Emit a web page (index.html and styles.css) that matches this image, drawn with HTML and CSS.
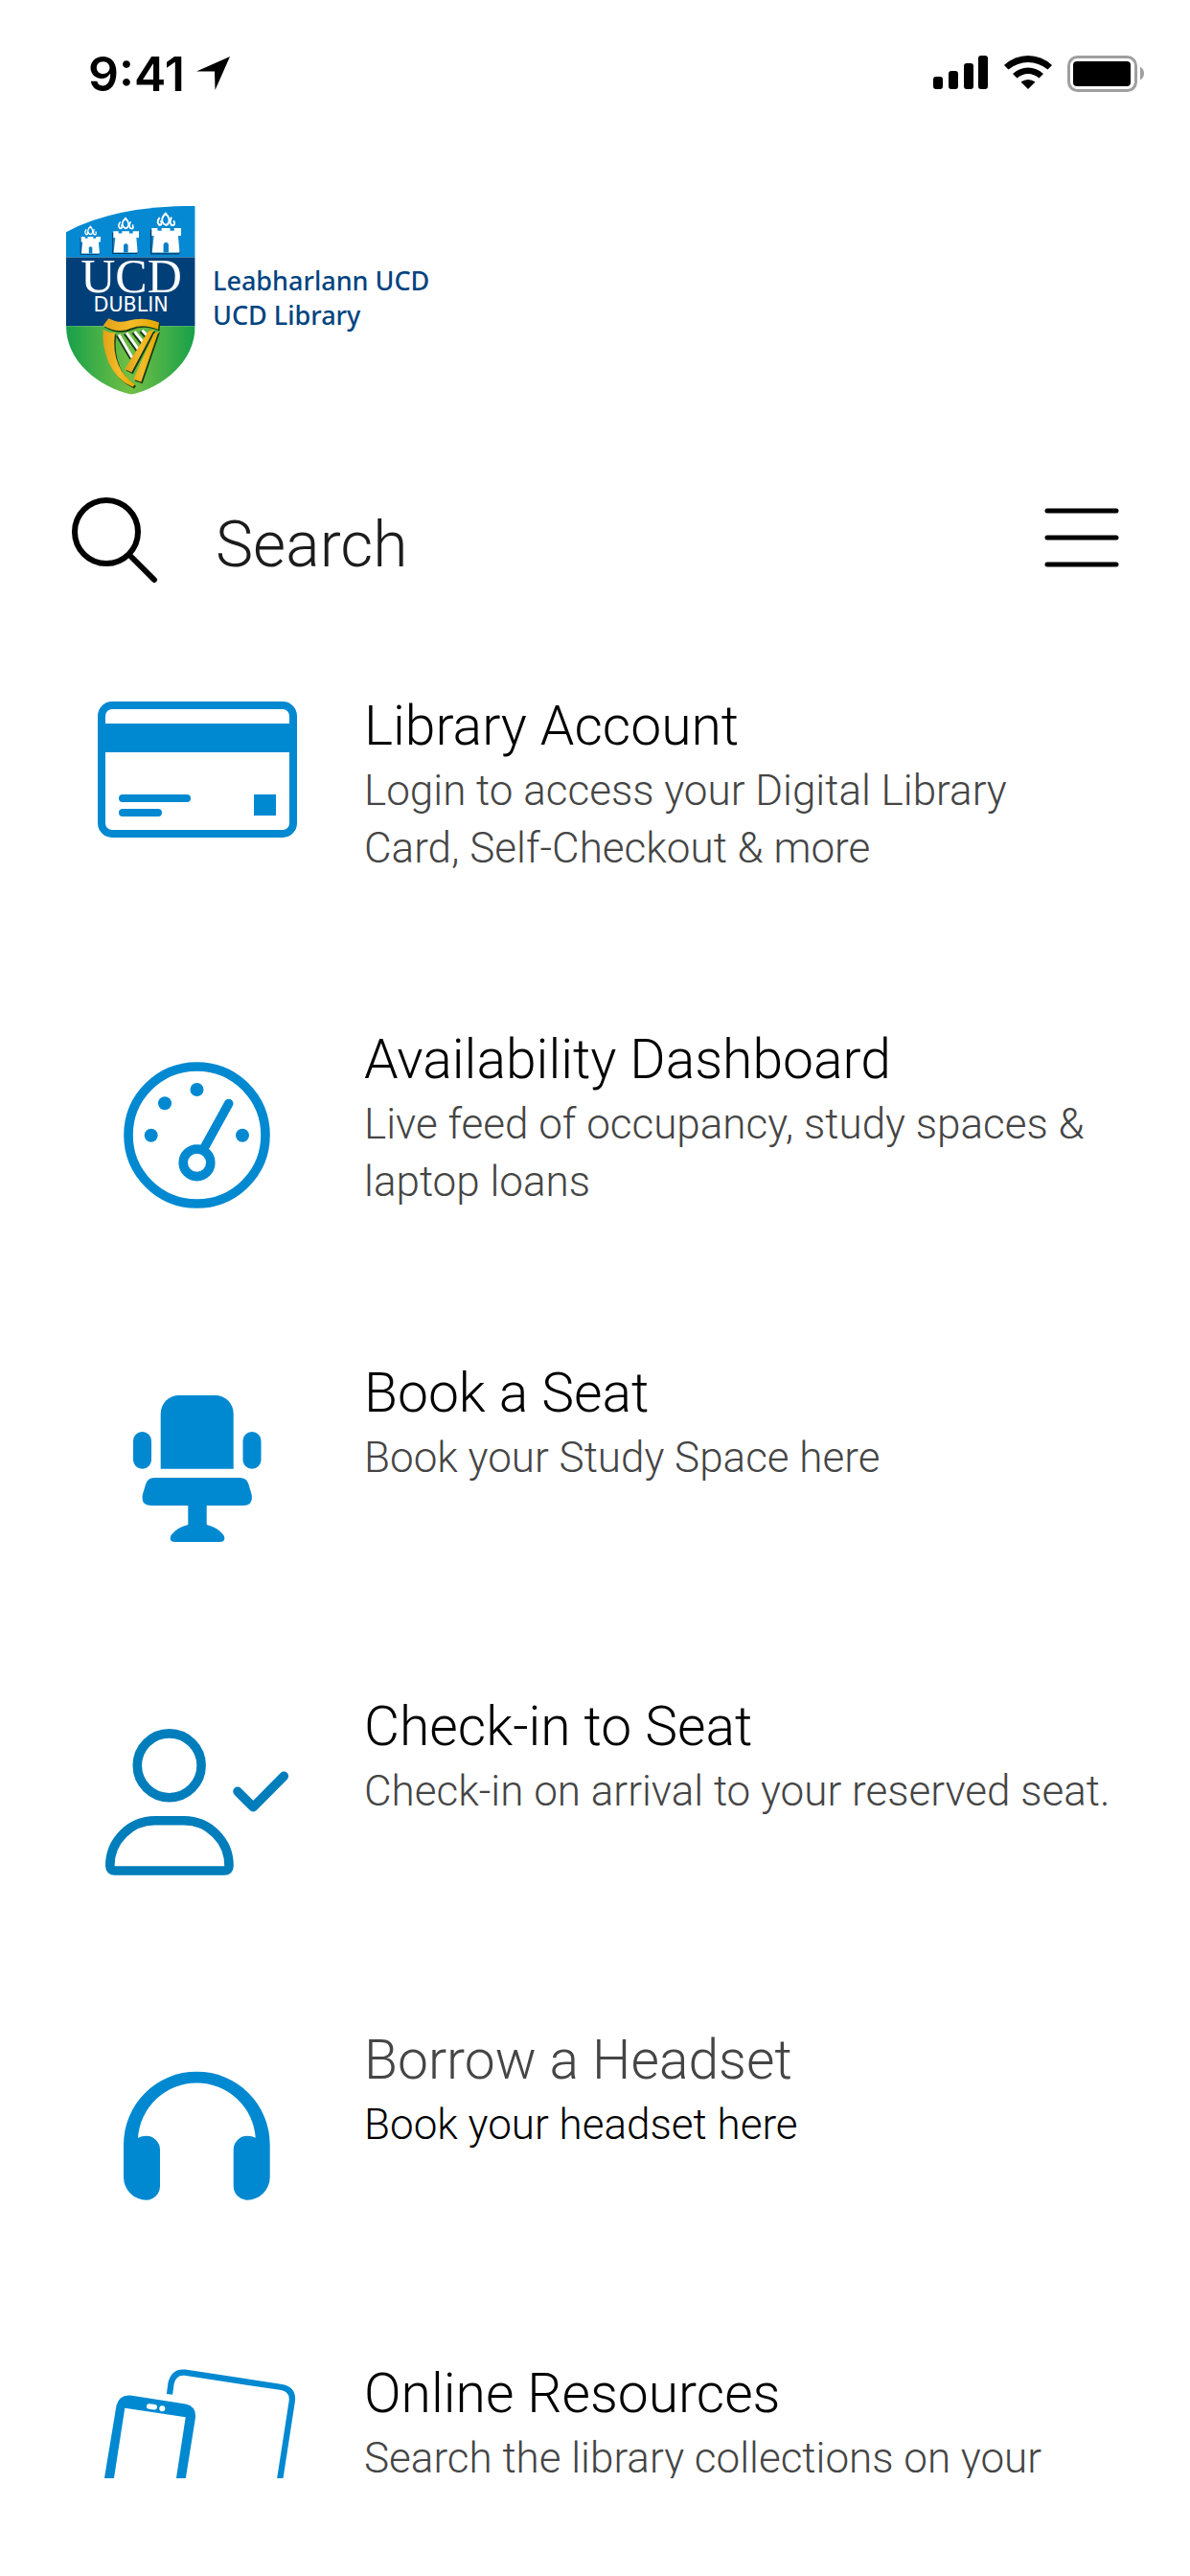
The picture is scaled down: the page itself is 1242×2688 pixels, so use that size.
FILE: index.html
```html
<!DOCTYPE html>
<html lang="en">
<head>
  <meta charset="UTF-8">
  <meta name="viewport" content="width=device-width, initial-scale=1.0">
  <title>UCD Library</title>
  <link rel="stylesheet" href="styles.css">
</head>
<body>
  <div class="screen">
    <div class="status-bar">
      <div class="status-time">
        <span>9:41</span>
        <svg width="36" height="36" viewBox="0 0 36 36"><path d="M0 15.500L35 0L19.500 35L19 15.500Z"/></svg>
      </div>
      <div class="status-icons">
        <svg width="58" height="38" viewBox="0 0 58 38">
          <rect x="0" y="22" width="10" height="13" rx="3"/>
          <rect x="16" y="16" width="10" height="19" rx="3"/>
          <rect x="32" y="8" width="10" height="27" rx="3"/>
          <rect x="47" y="0" width="10" height="35" rx="3"/>
        </svg>
        <svg width="50" height="38" viewBox="0 0 50 38">
          <path d="M0 10Q11 0 25 0T50 10L45.500 14.500Q36 7 25 7T4.500 14.500Z"/>
          <path d="M9 19Q16 12.500 25 12.500T41 19L36.500 23.500Q31 19 25 19T13.500 23.500Z"/>
          <path d="M17.500 27.500Q21 25 25 25T32.500 27.500L25 35Z"/>
        </svg>
        <svg width="80" height="38" viewBox="0 0 80 38">
          <rect x="1.500" y="1.500" width="70" height="35" rx="9" fill="none" stroke="#9f9f9f" stroke-width="3"/>
          <rect x="6" y="6" width="60" height="26" rx="4"/>
          <path d="M76 11.500Q80 14 80 18.500T76 25.500Z" fill="#9f9f9f"/>
        </svg>
      </div>
    </div>

    <header class="brand">
      <svg class="brand-logo" viewBox="57 43 405 593" role="img" aria-label="UCD Dublin">
        <defs>
          <clipPath id="shield"><path d="M57 127Q210 45 461 45V420C461 535 360 612 262 636C160 612 57 535 57 420Z"/></clipPath>
          <linearGradient id="green"><stop offset="0" stop-color="#17a04a"/><stop offset=".5" stop-color="#72bf44"/><stop offset="1" stop-color="#17a04a"/></linearGradient>
          <linearGradient id="gold"><stop offset="0" stop-color="#e0a018"/><stop offset=".5" stop-color="#f6bb28"/><stop offset="1" stop-color="#e3a800"/></linearGradient>
          <g id="tower">
            <path d="M-2 44V101H72L78 96" fill="none" stroke="#0a3a60" stroke-width="3"/>
            <path d="M0 40H16V46H27V40H50V46H61V40H80V58H72L76 98H1L6 58H0Z" fill="#fff"/>
            <path d="M32 98V78Q39 69 46 78V98Z" fill="#0a80c4"/>
            <g fill="none" stroke="#fff" stroke-width="5">
              <path d="M38 5Q22 18 32 29Q42 37 47 25Q50 16 38 5Z"/>
              <path d="M22 15Q12 25 20 32Q30 34 25 22"/>
              <path d="M54 14Q47 26 53 32Q66 36 60 22"/>
            </g>
          </g>
        </defs>
        <g clip-path="url(#shield)">
          <path fill="#0489d2" d="M57 43H462V206H57Z"/>
          <path fill="#003f78" d="M57 206H462V421H57Z"/>
          <path fill="url(#green)" d="M57 421H462V636H57Z"/>
        </g>
        <use href="#tower" transform="translate(104 105) scale(.76 .91)"/>
        <use href="#tower" transform="translate(205 78) scale(1 1.150)"/>
        <use href="#tower" transform="translate(325 62) scale(1.150 1.320)"/>
        <g fill="#fff" text-anchor="middle">
          <text class="logo-serif" x="261" y="317">UCD</text>
          <text class="logo-sans" x="260" y="377">DUBLIN</text>
        </g>
        <g fill="none" stroke="#173c16" stroke-width="14"><path d="M219 450L262 522M243 444L283 500M268 440L300 480M292 436L314 460"/></g>
        <g fill="none" stroke="#fff" stroke-width="9"><path d="M222 448L264 520M246 442L286 498M271 438L303 478M295 434L317 458"/></g>
        <g fill="#173c16" transform="translate(4 5)">
          <path d="M173 420Q185 402 191 397Q220 414 250 405Q300 390 348 410L345 432Q300 412 260 428Q220 447 173 420Z"/>
          <path d="M173 432Q190 444 210 442Q202 500 222 545Q238 580 272 604L266 612Q215 590 190 535Q168 480 173 432Z"/>
          <path d="M314 438L333 432L262 566L241 556ZM331 446L347 436L292 596L268 588Z"/>
        </g>
        <g fill="url(#gold)">
          <path d="M173 420Q185 402 191 397Q220 414 250 405Q300 390 348 410L345 432Q300 412 260 428Q220 447 173 420Z"/>
          <path d="M173 432Q190 444 210 442Q202 500 222 545Q238 580 272 604L266 612Q215 590 190 535Q168 480 173 432Z"/>
          <path d="M314 438L333 432L262 566L241 556ZM331 446L347 436L292 596L268 588Z"/>
        </g>
      </svg>
      <p class="brand-name">Leabharlann UCD<br>UCD Library</p>
    </header>

    <form class="search">
      <button type="submit" class="icon-button" aria-label="Submit search">
        <svg width="90" height="90" viewBox="0 0 90 90" fill="none" stroke="#000" stroke-linecap="round">
          <circle cx="36" cy="36" r="33" stroke-width="6"/>
          <path d="M60 60L86 86" stroke-width="6"/>
        </svg>
      </button>
      <input type="search" class="search-input" placeholder="Search" aria-label="Search">
      <button type="button" class="icon-button menu-button" aria-label="Menu">
        <svg width="78" height="62" viewBox="0 0 78 62" stroke="#000" stroke-width="5" stroke-linecap="round">
          <path d="M3 3H75M3 31H75M3 59H75"/>
        </svg>
      </button>
    </form>

    <nav class="menu">
      <a class="menu-item" href="#account">
        <svg class="menu-icon" viewBox="0 0 208 208">
          <rect x="4" y="4" width="200" height="134" rx="11" fill="none" stroke="currentColor" stroke-width="8"/>
          <path d="M2 23H206V53H2ZM163 97H186V119H163Z"/>
          <rect x="22" y="97" width="75" height="8" rx="4"/>
          <rect x="22" y="112" width="45" height="8" rx="4"/>
        </svg>
        <div class="menu-text">
          <h2>Library Account</h2>
          <p>Login to access your Digital Library<br>Card, Self-Checkout &amp; more</p>
        </div>
      </a>
      <a class="menu-item" href="#dashboard">
        <svg class="menu-icon" viewBox="0 0 208 208">
          <g fill="none" stroke="currentColor" stroke-width="9.600" stroke-linecap="round">
            <circle cx="103.500" cy="104.500" r="71.500"/>
            <circle cx="103.500" cy="133.300" r="14.300"/>
            <path d="M110.500 119L136.700 71.500"/>
          </g>
          <circle cx="103.500" cy="57" r="7"/>
          <circle cx="70" cy="71.300" r="7"/>
          <circle cx="55.700" cy="104.700" r="7"/>
          <circle cx="151" cy="104.700" r="7"/>
        </svg>
        <div class="menu-text">
          <h2>Availability Dashboard</h2>
          <p>Live feed of occupancy, study spaces &amp; laptop loans</p>
        </div>
      </a>
      <a class="menu-item" href="#book">
        <svg class="menu-icon" viewBox="0 0 208 208">
          <path d="M65.700 104.700V47A19 19 0 0 1 84.700 28H122.700A19 19 0 0 1 141.700 47V104.700Z"/>
          <rect x="37" y="66" width="19" height="38.700" rx="9.500"/>
          <rect x="151.500" y="66" width="19" height="38.700" rx="9.500"/>
          <path d="M59 114H148.500Q155.500 114 157.500 121L160.500 131Q163 143 151.500 143H56Q44.500 143 47 131L50 121Q52 114 59 114Z"/>
          <path d="M94.300 142H113.700V163Q125 165.500 131.500 174Q134.500 181 127.500 181H80.500Q73.500 181 76.500 174Q83 165.500 94.300 163Z"/>
        </svg>
        <div class="menu-text">
          <h2>Book a Seat</h2>
          <p>Book your Study Space here</p>
        </div>
      </a>
      <a class="menu-item" href="#checkin">
        <svg class="menu-icon menu-icon-dark" viewBox="0 0 208 208">
          <g fill="none" stroke="currentColor" stroke-width="9.600" stroke-linecap="round" stroke-linejoin="round">
            <circle cx="74.700" cy="66.300" r="33.400"/>
            <path d="M12.800 171A47 47 0 0 1 60 123.800H90A47 47 0 0 1 137 171Q137 176 132 176H18Q12.800 176 12.800 171Z"/>
            <path d="M146 93.300L162.300 109.700L194.300 77.300"/>
          </g>
        </svg>
        <div class="menu-text">
          <h2>Check-in to Seat</h2>
          <p>Check-in on arrival to your reserved seat.</p>
        </div>
      </a>
      <a class="menu-item menu-item-alt" href="#headset">
        <svg class="menu-icon" viewBox="0 0 208 208">
          <path d="M27 148V114A76.300 76.300 0 0 1 179.700 114V148A24 24 0 0 1 156 171.700A14.500 14.500 0 0 1 141.700 157.500V119A14.500 14.500 0 0 1 156 104.700Q161 104.700 164.700 106.700A61.500 61.500 0 0 0 42 106.700Q46 104.700 50.700 104.700A14.500 14.500 0 0 1 65 119V157.500A14.500 14.500 0 0 1 50.700 171.700A24 24 0 0 1 27 148Z"/>
        </svg>
        <div class="menu-text">
          <h2>Borrow a Headset</h2>
          <p>Book your headset here</p>
        </div>
      </a>
      <a class="menu-item" href="#resources">
        <svg class="menu-icon" viewBox="0 0 208 208">
          <path d="M75 26.300L76.500 15Q79.500 2.500 91 3.700L192 19Q204.500 21.500 202.700 34L182 168H100" fill="none" stroke="currentColor" stroke-width="6.300"/>
          <path fill-rule="evenodd" d="M-3 174L19.500 38Q22.500 26.500 34 27.500L91.500 36.500Q103 39 102 50.500L81 182ZM17 113.700L28.300 40.700L91.700 50.300L82 113.700L74 164L9 164Z"/>
          <path d="M53.700 39L59.200 39.800" stroke="#fff" stroke-width="5.500" stroke-linecap="round"/>
          <circle cx="67.300" cy="41.300" r="3" fill="#fff"/>
        </svg>
        <div class="menu-text">
          <h2>Online Resources</h2>
          <p>Search the library collections on your</p>
        </div>
      </a>
    </nav>
  </div>
</body>
</html>
```
FILE: styles.css
```css
* {
  box-sizing: border-box;
}

body {
  margin: 0;
  background-color: #fff;
  color: #000;
  font-family: Roboto, "Liberation Sans", sans-serif;
  font-weight: 300;
}

.screen {
  display: flex;
  flex-direction: column;
  height: 100vh;
  padding-bottom: 102px;
}

.status-bar {
  display: flex;
  justify-content: space-between;
  align-items: center;
  padding: 47px 48px 0 92px;
}

.status-time {
  display: flex;
  align-items: center;
  gap: 12px;
  font-family: Inter, sans-serif;
  font-size: 50px;
  font-weight: 600;
  line-height: 60px;
}

.status-icons {
  display: flex;
  gap: 16px;
}

.brand {
  display: flex;
  align-items: center;
  gap: 18px;
  padding: 107px 69px 0;
}

.brand-logo {
  width: 135px;
  height: 198px;
}

.logo-serif {
  font-family: "Liberation Serif", serif;
  font-size: 150px;
  font-weight: 400;
}

.logo-sans {
  font-family: "DejaVu Sans", sans-serif;
  font-size: 62px;
  font-weight: 400;
}

.brand-name {
  margin: 0 0 4px;
  color: #004380;
  font-family: "Noto Sans", sans-serif;
  font-size: 27px;
  font-weight: 500;
  line-height: 36px;
}

.search {
  display: flex;
  align-items: center;
  padding: 104px 74px 0 75px;
}

.icon-button {
  display: flex;
  padding: 0;
  border: none;
  background: none;
  cursor: pointer;
}

.menu-button {
  margin-bottom: 6px;
}

.search-input {
  flex: 1;
  min-width: 0;
  height: 96px;
  margin-left: 60px;
  padding: 8px 0 0;
  border: none;
  outline: none;
  background: none;
  font: inherit;
  font-size: 66px;
}

.search-input::placeholder {
  color: #1c1c1c;
  opacity: 1;
}

.menu {
  flex: 1;
  display: flex;
  flex-direction: column;
  gap: 140px;
  min-height: 0;
  margin-top: 120px;
  padding: 0 60px 0 102px;
  overflow: hidden;
}

.menu-item {
  display: flex;
  flex-shrink: 0;
  gap: 70px;
  height: 208px;
  color: #000;
  text-decoration: none;
}

.menu-icon {
  flex-shrink: 0;
  width: 208px;
  height: 208px;
  color: #0089d1;
  fill: currentColor;
}

.menu-icon-dark {
  color: #007dbb;
}

.menu-text h2 {
  margin: 0;
  font-size: 57px;
  font-weight: 300;
  line-height: 52px;
}

.menu-text p {
  margin: 11px 0 0;
  color: #454545;
  font-size: 44px;
  line-height: 60px;
}

.menu-item-alt h2 {
  color: #454545;
}

.menu-item-alt p {
  color: #000;
}
```
